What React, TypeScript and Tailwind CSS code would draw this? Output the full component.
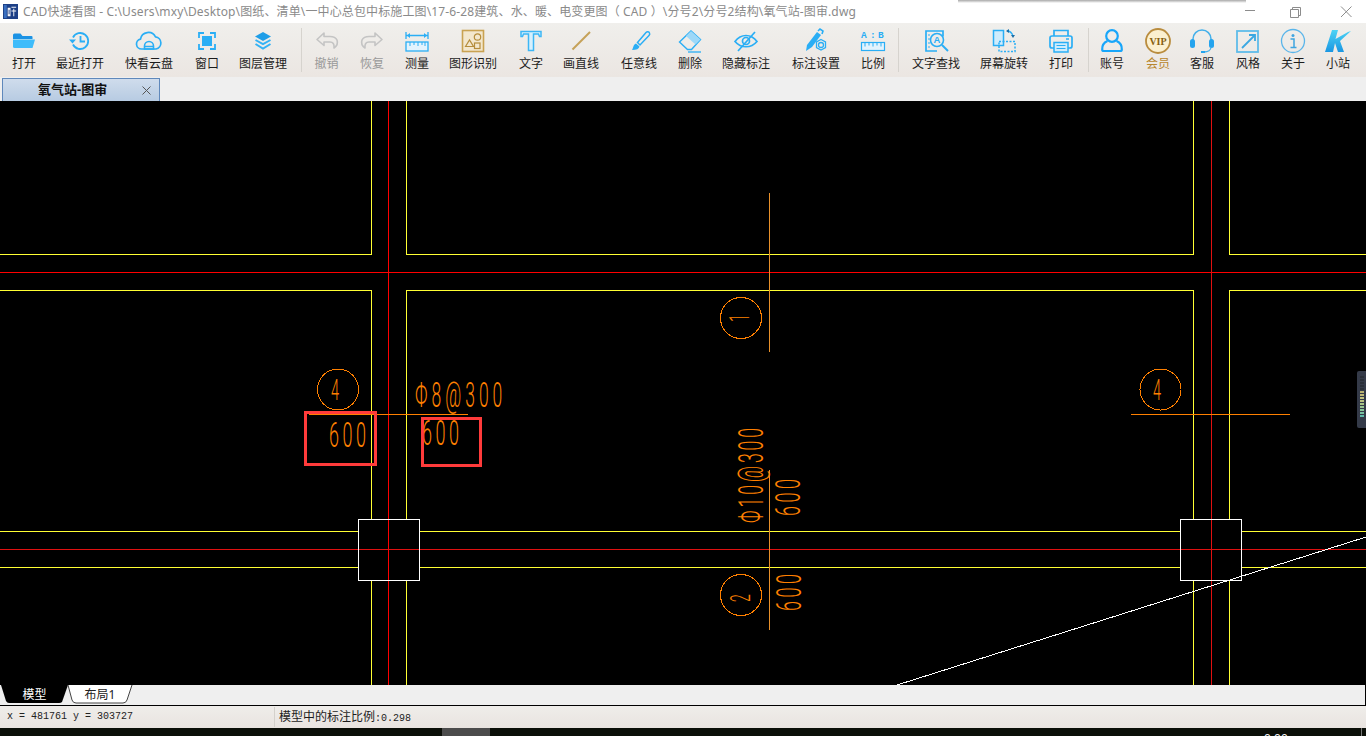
import type { ReactNode } from "react";

const B = "#2aaef5";
const G = "#c4c4c4";

function Ico({ children }: { children: ReactNode }) {
  return (
    <svg viewBox="0 0 28 28" width="28" height="28" fill="none" stroke={B} strokeWidth="1.6">
      {children}
    </svg>
  );
}

const icons: Record<string, ReactNode> = {
  open: (
    <Ico>
      <path d="M3 8a1.5 1.5 0 0 1 1.5-1.5h6l2 2.5h9a1 1 0 0 1 1 1v2H3z" fill="#1b92e4" stroke="none" />
      <path d="M3 12.5h22l-2.5 8.5H4.5A1.5 1.500 0 0 1 3 19.5z" fill="#3fbcfa" stroke="none" />
    </Ico>
  ),
  recent: (
    <Ico>
      <path d="M7 10.5A8 8 0 1 1 7 17.5" strokeWidth="1.8" />
      <path d="M3 12.5h7l-3.500 4z" fill={B} stroke="none" />
      <path d="M14.5 9v5.5h4.5" strokeWidth="1.8" />
    </Ico>
  ),
  cloud: (
    <Ico>
      <path d="M7 22H6.5a5 5 0 0 1-1-9.9A8 8 0 0 1 20.5 9.8 6.2 6.2 0 0 1 21 22z" strokeWidth="1.7" />
      <path d="M9.5 22v-3a4.500 4.500 0 0 1 9 0v3zM9.5 19.5h9" strokeWidth="1.6" />
    </Ico>
  ),
  window: (
    <Ico>
      <path d="M11 6H6v5M17 6h5v5M6 17v5h5M22 17v5h-5" strokeWidth="1.8" />
      <rect x="9" y="9" width="10" height="10" fill={B} stroke="none" />
    </Ico>
  ),
  layers: (
    <Ico>
      <path d="M14 5l8 4.500-8 4.500-8-4.500z" fill="#1f9ee8" stroke="none" />
      <path d="M6.5 13l7.500 4.200 7.500-4.200M6.5 17l7.500 4.500 7.500-4.500" strokeWidth="2" stroke="#33b2f5" />
    </Ico>
  ),
  undo: (
    <Ico>
      <path d="M11 6L4 12.500 11 18.500v-3.500h6c3 0 4.500 2 4 6 3-2 4-5 3-8-1-2-3.500-3.500-7-3.500h-6z" stroke={G} strokeLinejoin="round" />
    </Ico>
  ),
  redo: (
    <Ico>
      <path d="M17 6l7 6.500-7 6v-3.500h-6c-3 0-4.500 2-4 6-3-2-4-5-3-8 1-2 3.500-3.500 7-3.500h6z" stroke={G} strokeLinejoin="round" />
    </Ico>
  ),
  measure: (
    <Ico>
      <path d="M3 5v7M25 5v7M3.5 8.5h21" strokeWidth="1.3" />
      <path d="M4 8.500l3-2.500v5zM24 8.500l-3-2.500v5z" fill={B} stroke="none" />
      <rect x="3" y="15" width="22" height="9" strokeWidth="1.3" fill="#e3f3fd" />
      <path d="M7 15v4M11 15v3M15 15v4M19 15v3M22 15v4" strokeWidth="1" />
    </Ico>
  ),
  shape: (
    <Ico>
      <rect x="3.5" y="3.5" width="21" height="21" stroke="#c9a251" strokeWidth="1.6" fill="#f3e7cd" />
      <path d="M6.5 19.500l4-6.500 4 6.500z" stroke="#b58d3c" strokeWidth="1.2" />
      <circle cx="18.5" cy="10" r="3.2" stroke="#b58d3c" strokeWidth="1.2" />
      <rect x="15.5" y="16" width="5.500" height="5.500" stroke="#b58d3c" strokeWidth="1.2" />
    </Ico>
  ),
  text: (
    <Ico>
      <path d="M4 4.500h20v5h-1.500l-1-2.500H16.500v16.500h-5V7H6.500l-1 2.500H4z" strokeWidth="1.5" fill="#d7f0fd" stroke="#3db6f5" />
    </Ico>
  ),
  line: (
    <Ico>
      <path d="M5.500 22.500L23 5" stroke="#c5a258" strokeWidth="2" />
    </Ico>
  ),
  pen: (
    <Ico>
      <path d="M12.500 15.500L21 5.500c1-1 3-1 3.500.5.5 1 0 2-.5 2.500L15 18z" strokeWidth="1.5" />
      <path d="M11 16.500l3.500 3c-.5 2.500-3 3.500-7.500 3.500 1.500-2 1-5.500 4-6.500z" fill={B} stroke="none" />
    </Ico>
  ),
  eraser: (
    <Ico>
      <path d="M3.500 15L15 4l9.500 8.500-9 10h-4z" strokeWidth="1.4" />
      <path d="M10 9l9.500 8.500 5-5L15 4z" fill="#9dd8f8" stroke="none" />
      <path d="M12 25h13" strokeWidth="1.3" />
    </Ico>
  ),
  eye: (
    <Ico>
      <path d="M3 14.500c6-8 16-8 22 0-6 7-16 7-22 0z" strokeWidth="1.7" />
      <circle cx="14" cy="14" r="3.5" strokeWidth="1.7" />
      <path d="M6 24L23 5" strokeWidth="1.7" />
    </Ico>
  ),
  markset: (
    <Ico>
      <path d="M4 24l1-6L15 5l4 3-9 12z" fill={B} stroke="none" />
      <path d="M16 4l2-2 3 2-1 3" strokeWidth="1.6" />
      <circle cx="19" cy="18" r="2.5" strokeWidth="1.3" />
      <path d="M19 12.500l4.500 2.500v5.500L19 23l-4.500-2.500V15z" strokeWidth="1.3" />
    </Ico>
  ),
  ratio: (
    <Ico>
      <text x="2" y="11" fontSize="9.5" fontWeight="700" fill={B} stroke="none" fontFamily="Liberation Mono, monospace">A</text>
      <text x="11" y="11" fontSize="9.5" fontWeight="700" fill={B} stroke="none" fontFamily="Liberation Mono, monospace">:</text>
      <text x="19" y="11" fontSize="9.5" fontWeight="700" fill={B} stroke="none" fontFamily="Liberation Mono, monospace">B</text>
      <rect x="2.5" y="15.5" width="23" height="8" strokeWidth="1.2" fill="#e3f3fd" />
      <path d="M6 15.500v4M10 15.500v3M14 15.500v4M18 15.500v3M22 15.500v4" strokeWidth="1" />
    </Ico>
  ),
  find: (
    <Ico>
      <path d="M21 9.500V4H4v20h11" strokeWidth="1.7" />
      <path d="M6 8h2M6 12h2M6 16h2M6 20h2" strokeWidth="1.2" />
      <circle cx="15" cy="13" r="6.5" strokeWidth="1.6" />
      <text x="11.5" y="16" fontSize="9.5" fontWeight="700" fill={B} stroke="none" fontFamily="Liberation Sans, sans-serif">A</text>
      <path d="M20 18l6 6" strokeWidth="2" />
    </Ico>
  ),
  rotate: (
    <Ico>
      <rect x="3.5" y="3.5" width="10" height="15" fill="#cfecfc" strokeWidth="1.5" />
      <path d="M9 14.500h16v10H9z" strokeWidth="1.5" strokeDasharray="2 1.5" />
      <path d="M17 4c3 0 5 2 6 5" strokeWidth="1.3" />
      <path d="M16 4l3-2v4zM23 11l-2-3h4z" fill="#1b6fa8" stroke="none" />
    </Ico>
  ),
  print: (
    <Ico>
      <path d="M7 9V3.500h14V9" strokeWidth="1.7" />
      <path d="M7 21H5a2 2 0 0 1-2-2v-8a2 2 0 0 1 2-2h18a2 2 0 0 1 2 2v8a2 2 0 0 1-2 2h-2" strokeWidth="1.7" />
      <path d="M7 15.500h14V25H7z" strokeWidth="1.5" fill="#cfecfc" />
      <path d="M9.5 18.500h9M9.500 21.500h9" strokeWidth="1.2" />
      <path d="M19 12h3" strokeWidth="1.5" />
    </Ico>
  ),
  user: (
    <Ico>
      <circle cx="14" cy="9" r="5.8" stroke="#18a6fa" strokeWidth="2.2" />
      <path d="M9.500 14C6 15.500 4 19 4.200 22.500c0 1 .8 1.500 1.500 1.500h16.600c.7 0 1.500-.5 1.500-1.500.2-3.500-1.800-7-5.300-8.500" stroke="#18a6fa" strokeWidth="2.2" />
    </Ico>
  ),
  vip: (
    <Ico>
      <circle cx="14" cy="14" r="12" stroke="#b98c3e" strokeWidth="1.8" fill="#fbf0d0" />
      <text x="14" y="17.5" textAnchor="middle" fontSize="10" fontWeight="700" fill="#86600f" stroke="none" fontFamily="Liberation Serif, serif">VIP</text>
    </Ico>
  ),
  service: (
    <Ico>
      <path d="M5 14v-2a9 9 0 0 1 18 0v2" stroke="#44b0ea" strokeWidth="1.5" />
      <rect x="2" y="12" width="5" height="9" rx="2.5" fill="#25a4ee" stroke="none" />
      <rect x="21" y="12" width="5" height="9" rx="2.5" fill="#25a4ee" stroke="none" />
      <path d="M23 20c0 3-3 5-7 5" stroke="#44b0ea" strokeWidth="1.3" />
      <path d="M13 25h4" stroke="#25a4ee" strokeWidth="2" />
    </Ico>
  ),
  style: (
    <Ico>
      <rect x="3" y="4" width="21" height="21" stroke="#5fbce9" strokeWidth="1.8" />
      <path d="M15 8h6v6" stroke="#3aa8e2" strokeWidth="1.8" />
      <path d="M20.500 8.500L8 21" stroke="#3aa8e2" strokeWidth="1.8" />
    </Ico>
  ),
  about: (
    <Ico>
      <circle cx="14" cy="14" r="11.500" stroke="#5ab5ea" strokeWidth="1.3" />
      <circle cx="14" cy="8.500" r="1.5" fill="#3fa5e0" stroke="none" />
      <path d="M11.500 12h3.500v8M11.500 20.500h6" stroke="#3fa5e0" strokeWidth="1.5" />
    </Ico>
  ),
  site: (
    <Ico>
      <defs>
        <linearGradient id="kg" x1="0" y1="0" x2="0" y2="1">
          <stop offset="0" stopColor="#4dd3f5" />
          <stop offset="1" stopColor="#1a96e2" />
        </linearGradient>
      </defs>
      <path d="M8 3h6l-2.500 9L24 5l3-1-11 10 4 11h-6l-3-9-2 9H1z" fill="url(#kg)" stroke="none" />
    </Ico>
  ),
};

type Tool = { label: string; icon: string; w: number; cls?: string };
type Entry = Tool | { sep: number };

const tools: Entry[] = [
  { label: "打开", icon: "open", w: 48 },
  { label: "最近打开", icon: "recent", w: 64 },
  { label: "快看云盘", icon: "cloud", w: 74 },
  { label: "窗口", icon: "window", w: 42 },
  { label: "图层管理", icon: "layers", w: 70 },
  { sep: 7 },
  { label: "撤销", icon: "undo", w: 43, cls: "text-[#999999]" },
  { label: "恢复", icon: "redo", w: 48, cls: "text-[#999999]" },
  { label: "测量", icon: "measure", w: 42 },
  { label: "图形识别", icon: "shape", w: 70 },
  { label: "文字", icon: "text", w: 46 },
  { label: "画直线", icon: "line", w: 54 },
  { label: "任意线", icon: "pen", w: 62 },
  { label: "删除", icon: "eraser", w: 40 },
  { label: "隐藏标注", icon: "eye", w: 72 },
  { label: "标注设置", icon: "markset", w: 68 },
  { label: "比例", icon: "ratio", w: 46 },
  { sep: 4 },
  { label: "文字查找", icon: "find", w: 72 },
  { label: "屏幕旋转", icon: "rotate", w: 64 },
  { label: "打印", icon: "print", w: 50 },
  { sep: 4 },
  { label: "账号", icon: "user", w: 44 },
  { label: "会员", icon: "vip", w: 48, cls: "text-[#b8862d]" },
  { label: "客服", icon: "service", w: 40 },
  { label: "风格", icon: "style", w: 52 },
  { label: "关于", icon: "about", w: 38 },
  { label: "小站", icon: "site", w: 52 },
];

const YEL = "#ffff33";
const RED = "#ff0000";
const ORG = "#ff8000";

function L({ d, c }: { d: string; c: string }) {
  return <path d={d} stroke={c} strokeWidth={1} fill="none" shapeRendering="crispEdges" />;
}

// narrow single-stroke look of the CAD font: squeezed glyphs, wide tracking
function Cad(props: { x: number; y: number; size: number; gap?: number; rot?: number; mid?: boolean; children: string }) {
  const { x, y, size, gap = 0, rot = 0, mid, children } = props;
  return (
    <text
      fontSize={size}
      fill={ORG}
      fontWeight={300}
      letterSpacing={gap}
      fontFamily="Roboto, 'Liberation Sans', sans-serif"
      textAnchor={mid ? "middle" : "start"}
      transform={`translate(${x} ${y}) rotate(${rot}) scale(0.5 1)`}
    >
      {children}
    </text>
  );
}

function Drawing() {
  return (
    <svg viewBox="0 101 1366 584" width="1366" height="584" className="block">
      <L c={YEL} d="M371.5 101V254.500H0M406.5 101V254.500H1193.500V101M1229.5 101V254.500H1366" />
      <L c={YEL} d="M0 290.500H371.500V519M406.5 519V290.500H1193.500V519M1229.5 519V290.500H1366" />
      <L c={YEL} d="M0 531.500H358M420 531.500H1180M1242 531.500H1366M0 567.500H358M420 567.500H1180M1242 567.500H1366" />
      <L c={YEL} d="M371.5 581V685M406.5 581V685M1193.5 581V685M1229.5 581V685" />
      <L c={RED} d="M0 272.500H1366M388.5 101V685" />
      <L c="#e01010" d="M0 549.500H1366M1211.5 101V685" />
      <L c="#ffffff" d="M358.5 519.500H419.500V580.500H358.500ZM1180.5 519.500H1241.500V580.500H1180.500Z" />
      <path d="M897 685L1366 537" stroke="#ffffff" strokeWidth="1" shapeRendering="crispEdges" />

      <L c="#e8902a" d="M769.5 193V352M769.5 470V630" />
      <L c={ORG} d="M309 414.500H468M1131 414.500H1290" />
      <g fill="none" stroke={ORG} strokeWidth="1" shapeRendering="crispEdges">
        <circle cx="338" cy="389.5" r="20.5" />
        <circle cx="1160.5" cy="389.5" r="20.5" />
        <circle cx="741" cy="318" r="20.5" />
        <circle cx="741" cy="595" r="20.5" />
      </g>
      <Cad x={331} y={400} size={29}>4</Cad>
      <Cad x={1153} y={400} size={29}>4</Cad>
      <Cad x={749} y={318} size={28} rot={-90} mid>1</Cad>
      <Cad x={750} y={598} size={28} rot={-90} mid>2</Cad>
      <Cad x={415} y={407} size={35} gap={8}>Φ8@300</Cad>
      <Cad x={329} y={447} size={36} gap={7}>600</Cad>
      <Cad x={422} y={445} size={36} gap={7}>600</Cad>
      <Cad x={763} y={523} size={35} gap={6} rot={-90}>Φ10@300</Cad>
      <Cad x={800} y={516} size={36} gap={7} rot={-90}>600</Cad>
      <Cad x={801} y={611} size={36} gap={7} rot={-90}>600</Cad>

      <g fill="none" stroke="#ff3b3b" strokeWidth="3" shapeRendering="crispEdges">
        <rect x="305.5" y="412.5" width="70" height="52" />
        <rect x="422.5" y="418.5" width="58" height="47" />
      </g>
    </svg>
  );
}

function SideWidget() {
  const ticks = ["#2a2f38", "#2a2f38", "#2a2f38", "#2a2f38", "#2a2f38", "#b8b070", "#c0b878", "#c0c080", "#b8c080", "#a8c488", "#98c490", "#88c498", "#78c0a0", "#60b8a8"];
  return (
    <div className="absolute right-0 top-[270px] flex h-[57px] w-[9px] flex-col gap-px rounded-l-[2px] bg-[#343a48] pl-[3px] pt-[5px]">
      {ticks.map((c, i) => (
        <div key={i} className="h-[2px] w-[4px]" style={{ background: c }} />
      ))}
    </div>
  );
}

export default function App() {
  return (
    <div className="relative flex h-[736px] w-[1366px] flex-col overflow-hidden bg-white font-['Noto_Sans','Noto_Sans_CJK_SC',sans-serif] text-xs text-[#1c1c1c]">
      <div className="absolute left-[958px] top-0 h-[3px] w-[288px] bg-gradient-to-b from-[#a8a8a8] to-white" />

      {/* title bar */}
      <div className="flex h-[23px] shrink-0 items-center bg-white pl-[3px]">
        <svg viewBox="0 0 16 16" width="15" height="15">
          <rect width="16" height="16" fill="#1d3f86" />
          <rect x="1" y="1" width="3" height="14" fill="#3a6fc0" />
          <path d="M5 4h3v9H5zM6 6v5h1V6zM9 3h5v1H9zM11 5h1v8h-1zM9 7h5v1H9z" fill="#f4f6fa" />
        </svg>
        <span className="ml-[5px] whitespace-nowrap text-xs leading-[23px] tracking-[0.13px] text-[#8a8a8a]">
          CAD快速看图 - C:\Users\mxy\Desktop\图纸、清单\一中心总包中标施工图\17-6-28建筑、水、暖、电变更图（ CAD ）\分号2\分号2结构\氧气站-图审.dwg
        </span>
        <svg viewBox="0 0 120 12" width="120" height="12" className="ml-auto mr-[13px]" fill="none" stroke="#8c8c8c">
          <path d="M12 4.500H22" />
          <path d="M57.5 3.500h8v8h-8zM59.5 3.500v-2h8v8h-2" />
          <path d="M108 0.500l10.500 10.500M118.500 0.500L108 11" />
        </svg>
      </div>

      {/* toolbar */}
      <div className="flex h-[54px] shrink-0 bg-gradient-to-b from-[#f0efec] to-[#ebe6e2]">
        {tools.map((t, i) =>
          "sep" in t ? (
            <div key={i} className="flex justify-center py-[5px]" style={{ width: t.sep }}>
              <div className="h-full w-px bg-[#d6d3ce]" />
            </div>
          ) : (
            <div key={t.label} className="flex flex-col items-center pt-1" style={{ width: t.w }}>
              {icons[t.icon]}
              <span className={`mt-px whitespace-nowrap text-xs leading-4 ${t.cls ?? ""}`}>{t.label}</span>
            </div>
          ),
        )}
      </div>

      {/* document tab */}
      <div className="flex h-[24px] shrink-0 bg-[#efefef] pl-[2px] pt-px">
        <div className="flex h-[23px] w-[158px] items-center border border-b-0 border-[#5f88bb] bg-gradient-to-b from-[#cfdcec] to-[#b7cbe2] pl-[35px] pr-[8px]">
          <span className="text-[13px] font-bold text-[#111111]">氧气站-图审</span>
          <svg viewBox="0 0 9 9" width="9" height="9" className="ml-auto" stroke="#555555" fill="none">
            <path d="M0.5 0.5l8 8M8.5 0.5l-8 8" />
          </svg>
        </div>
      </div>

      {/* canvas */}
      <div className="relative h-[584px] shrink-0 bg-black">
        <Drawing />
        <SideWidget />
      </div>

      {/* sheet tabs */}
      <div className="flex h-[21px] shrink-0 border-b border-r border-b-black border-r-black bg-[#efefef]">
        <div className="relative ml-px flex h-[20px] w-[67px] items-center justify-center">
          <svg viewBox="0 0 67 20" className="absolute inset-0" width="67" height="20">
            <path d="M0 0H67L61 17Q60 18 58 18H8Q6 18 5 16Z" fill="#000000" />
          </svg>
          <span className="relative pb-px text-white">模型</span>
        </div>
        <div className="relative -ml-px flex h-[20px] w-[66px] items-center justify-center">
          <svg viewBox="0 0 66 20" className="absolute inset-0" width="66" height="20">
            <path d="M1 0L5 15Q6 18 9 18H56Q59 18 60 15L65 0" fill="#ffffff" stroke="#444444" />
          </svg>
          <span className="relative pb-px text-[#222222]">布局1</span>
        </div>
      </div>

      {/* status bar */}
      <div className="flex h-[22px] shrink-0 items-center bg-gradient-to-b from-[#efedea] to-[#e9e4e0]">
        <span className="w-[274px] whitespace-pre pl-[7px] font-['Liberation_Mono',monospace] text-[10px] text-[#222222]">x = 481761 y = 303727</span>
        <div className="h-[20px] w-px bg-[#d4d1cc]" />
        <span className="pl-[4px] text-xs">
          模型中的标注比例<span className="font-['Liberation_Mono',monospace] text-[10px]">:0.298</span>
        </span>
      </div>

      {/* desktop peeking out underneath */}
      <div className="relative h-[8px] flex-1 overflow-hidden bg-[#0b0f08]">
        <div className="absolute left-[442px] top-0 h-full w-[48px] bg-[#4c4c4c]" />
        <span className="absolute left-[1264px] top-[3px] text-xs leading-4 text-white">0:00</span>
        <div className="absolute left-[1361px] top-0 h-full w-px bg-[#777777]" />
      </div>
    </div>
  );
}
